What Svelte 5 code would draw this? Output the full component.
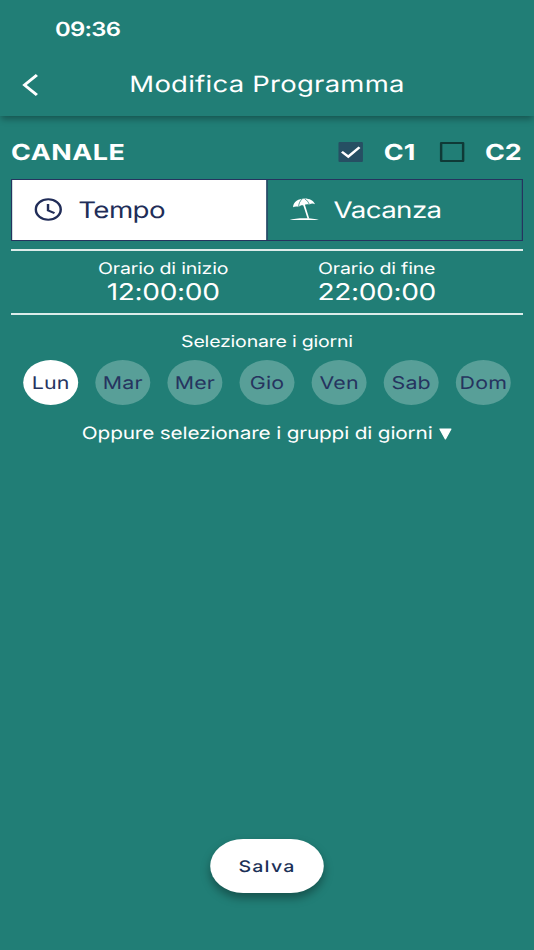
<script lang="ts">
  type Mode = 'tempo' | 'vacanza';

  const days = ['Lun', 'Mar', 'Mer', 'Gio', 'Ven', 'Sab', 'Dom'];

  let mode = $state<Mode>('tempo');
  let selected = $state(['Lun']);
  let channels = $state([
    { name: 'C1', on: true },
    { name: 'C2', on: false }
  ]);

  function toggleDay(day: string) {
    selected = selected.includes(day)
      ? selected.filter((d) => d !== day)
      : [...selected, day];
  }
</script>

<div class="screen">
  <header>
    <div class="status">09:36</div>
    <div class="bar">
      <button class="back" aria-label="Indietro">
        <svg viewBox="0 0 14 24" width="14" height="24">
          <path d="M12.2 2 L2 12 L12.2 22" />
        </svg>
      </button>
      <h1>Modifica Programma</h1>
    </div>
  </header>

  <main>
    <div class="channels">
      <h2>CANALE</h2>
      {#each channels as channel}
        <button class="channel" onclick={() => (channel.on = !channel.on)}>
          <span class="box" class:on={channel.on}>
            {#if channel.on}
              <svg viewBox="0 0 20 20" width="20" height="20">
                <path d="M2.8 9.8 L8 14.6 L17.2 5.2" />
              </svg>
            {/if}
          </span>
          <span class="name">{channel.name}</span>
        </button>
      {/each}
    </div>

    <div class="tabs">
      <button class="tab" class:active={mode === 'tempo'} onclick={() => (mode = 'tempo')}>
        <svg class="clock" viewBox="0 0 24 24" width="24" height="24">
          <circle cx="11.5" cy="11.5" r="10.2" />
          <path d="M11.3 6.1 V12.3 L16.6 15.1" />
        </svg>
        <span>Tempo</span>
      </button>
      <button class="tab" class:active={mode === 'vacanza'} onclick={() => (mode = 'vacanza')}>
        <svg class="beach" viewBox="0 0 24 24" width="24" height="24">
          <path d="M2.8 9.2 C3 3.8 7.4 0.6 12.2 0.5 C16.4 0.5 19.6 2.6 20.8 6.2 C19.2 5.2 17.6 5.4 16.2 6.6 C14.8 5.8 13 6 11.6 7.4 C10.2 6.8 8.6 7.2 7.4 8.8 C5.8 8.2 4.2 8.2 2.8 9.2 Z" />
          <path class="rib" d="M7.4 8.8 C7.4 5.4 8.6 2.8 10.4 0.8 M16.2 6.6 C15.4 4 14 2 12.4 0.8" />
          <path class="pole" d="M11.6 6 L15.4 20.6" />
          <path d="M0 22 C5 19.6 19 19.6 24 22 Z" />
        </svg>
        <span>Vacanza</span>
      </button>
    </div>

    <div class="times">
      <div class="time">
        <span class="label">Orario di inizio</span>
        <span class="value">12:00:00</span>
      </div>
      <div class="time">
        <span class="label">Orario di fine</span>
        <span class="value">22:00:00</span>
      </div>
    </div>

    <p class="hint">Selezionare i giorni</p>

    <div class="days">
      {#each days as day}
        <button class="day" class:active={selected.includes(day)} onclick={() => toggleDay(day)}>
          {day}
        </button>
      {/each}
    </div>

    <button class="groups">
      <span>Oppure selezionare i gruppi di giorni</span>
      <svg viewBox="0 0 11 12" width="11" height="12">
        <path d="M1 1 H10 L5.5 11 Z" />
      </svg>
    </button>
  </main>

  <footer>
    <button class="save">Salva</button>
  </footer>
</div>

<style>
  :global(body) {
    overflow: hidden;
    background: #217e76;
  }
  .screen {
    display: flex;
    flex-direction: column;
    width: 437px;
    height: 950px;
    transform: scaleX(1.22197);
    transform-origin: 0 0;
    background: #217e76;
    color: #fff;
    font-family: Inter, 'Liberation Sans', sans-serif;
    font-size: 17px;
    text-rendering: geometricPrecision;
  }
  button {
    margin: 0;
    padding: 0;
    border: 0;
    background: none;
    color: inherit;
    font: inherit;
    letter-spacing: inherit;
    text-rendering: inherit;
    cursor: pointer;
  }
  h1,
  h2,
  p {
    margin: 0;
  }
  svg {
    display: block;
    flex: none;
  }
  header {
    flex: none;
    height: 116px;
    box-shadow: 0 4px 6px -1px rgba(0, 0, 0, 0.32);
  }
  .status {
    padding: 17px 0 0 45px;
    font-size: 19.5px;
    font-weight: 600;
    letter-spacing: -0.6px;
    line-height: 25px;
  }
  .bar {
    display: grid;
    grid-template-columns: 50px 1fr 50px;
    align-items: center;
    height: 85px;
  }
  .back {
    padding-left: 18px;
  }
  .back path {
    fill: none;
    stroke: #fff;
    stroke-width: 2.5;
  }
  h1 {
    padding-top: 1px;
    text-align: center;
    font-size: 22.5px;
    font-weight: 400;
    letter-spacing: 0.2px;
    line-height: 28px;
  }
  main {
    display: flex;
    flex: 1;
    flex-direction: column;
    padding: 0 9px;
  }
  .channels {
    display: flex;
    align-items: center;
    height: 36px;
    margin-top: 18px;
    padding-right: 1px;
    font-size: 22px;
    font-weight: 700;
  }
  h2 {
    flex: 1;
    font-size: inherit;
    letter-spacing: 0.4px;
  }
  .channel {
    display: flex;
    align-items: center;
    gap: 17px;
    margin-left: 20px;
  }
  h2,
  .name {
    padding-top: 1px;
  }
  .box {
    box-sizing: border-box;
    width: 20px;
    height: 20px;
    border: 2px solid #0f3a37;
    border-radius: 1px;
  }
  .box.on {
    border: 0;
    background: #264f63;
  }
  .box path {
    fill: none;
    stroke: #fff;
    stroke-width: 2.2;
  }
  .tabs {
    display: flex;
    box-sizing: border-box;
    height: 62px;
    margin-top: 9px;
    border: 1.5px solid #26345f;
  }
  .tab {
    display: flex;
    flex: 1;
    align-items: center;
    gap: 12.5px;
    padding-left: 17.5px;
    font-size: 22.7px;
    letter-spacing: -0.5px;
  }
  .tab + .tab {
    border-left: 1px solid #26345f;
  }
  .tab.active {
    background: #fff;
    color: #212d58;
  }
  .clock {
    fill: none;
    stroke: currentColor;
    stroke-width: 2;
  }
  .beach {
    fill: currentColor;
  }
  .rib {
    fill: none;
    stroke: #217e76;
    stroke-width: 0.7;
  }
  .pole {
    fill: none;
    stroke: currentColor;
    stroke-width: 1.4;
  }
  .times {
    display: flex;
    justify-content: center;
    gap: 73px;
    box-sizing: border-box;
    height: 66px;
    margin-top: 8px;
    padding-top: 7px;
    border: solid #dcecea;
    border-width: 2px 0;
  }
  .time {
    display: flex;
    flex-direction: column;
    align-items: center;
  }
  .label {
    font-size: 16px;
    letter-spacing: -0.17px;
    line-height: 20px;
  }
  .value {
    font-size: 23px;
    letter-spacing: -0.3px;
    line-height: 28px;
  }
  .hint {
    margin-top: 16px;
    text-align: center;
    font-size: 16px;
    letter-spacing: -0.18px;
    line-height: 20px;
  }
  .days {
    display: flex;
    justify-content: center;
    gap: 14px;
    margin-top: 9px;
  }
  .day {
    flex: none;
    width: 45px;
    height: 45px;
    padding-top: 1px;
    border-radius: 50%;
    background: #589f98;
    color: #26345f;
    font-size: 17.5px;
    letter-spacing: 0.15px;
  }
  .day.active {
    background: #fff;
  }
  .groups {
    display: flex;
    align-items: center;
    justify-content: center;
    gap: 5px;
    margin-top: 17.5px;
    font-size: 17px;
    letter-spacing: -0.13px;
    line-height: 22px;
  }
  .groups path {
    fill: #fff;
    stroke: #fff;
    stroke-linejoin: round;
  }
  footer {
    display: flex;
    justify-content: center;
    padding-bottom: 57px;
  }
  .save {
    width: 93px;
    height: 54px;
    border-radius: 27px;
    background: #fff;
    box-shadow: 0 5px 9px rgba(0, 0, 0, 0.35);
    color: #1b3057;
    font-size: 16px;
    font-weight: 500;
    letter-spacing: 1px;
  }
</style>
